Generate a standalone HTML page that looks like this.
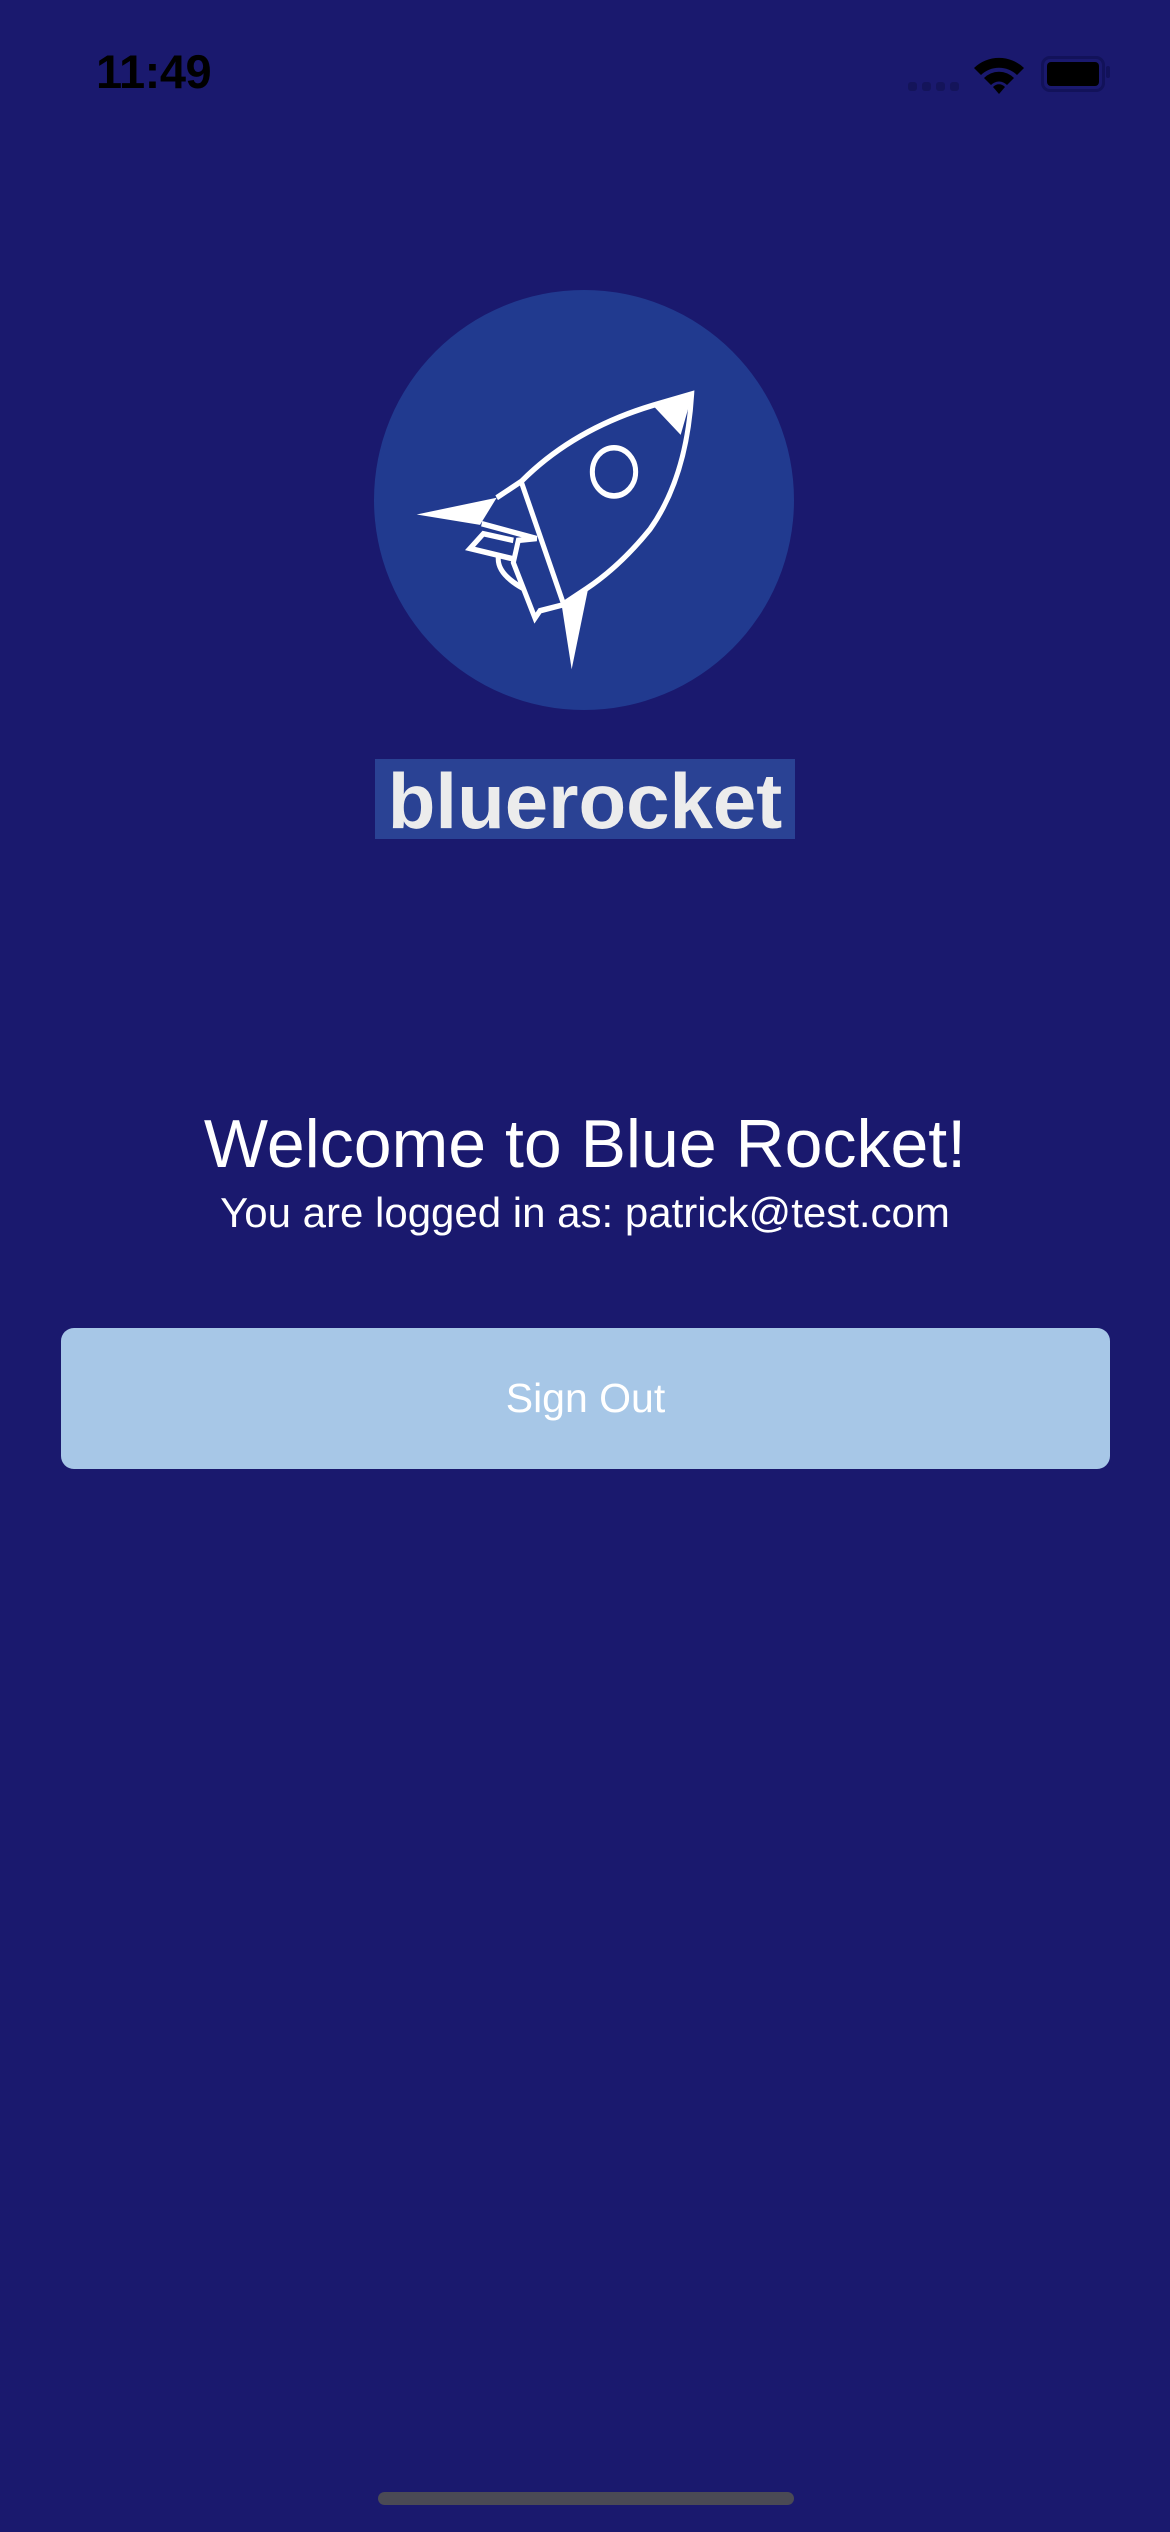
<!DOCTYPE html>
<html><head><meta charset="utf-8"><style>
html,body{margin:0;padding:0}
body{width:1170px;height:2532px;background:#1a196e;position:relative;overflow:hidden;font-family:"Liberation Sans",sans-serif}
.abs{position:absolute}
</style></head><body>
<div class="abs" style="left:96px;top:44px;font-size:47px;font-weight:bold;color:#000;letter-spacing:-0.5px">11:49</div>
<div class="abs" style="left:908px;top:82px;width:9px;height:9px;border-radius:3px;background:#14145a"></div>
<div class="abs" style="left:922px;top:82px;width:9px;height:9px;border-radius:3px;background:#14145a"></div>
<div class="abs" style="left:936px;top:82px;width:9px;height:9px;border-radius:3px;background:#14145a"></div>
<div class="abs" style="left:950px;top:82px;width:9px;height:9px;border-radius:3px;background:#14145a"></div>
<svg class="abs" style="left:972px;top:54px" width="54" height="40" viewBox="0 0 54 40">
<path d="M2 14 A36 36 0 0 1 52 14 L45 21 A26 26 0 0 0 9 21 Z" fill="#000"/>
<path d="M12 24 A21 21 0 0 1 42 24 L35 31 A11 11 0 0 0 19 31 Z" fill="#000"/>
<path d="M21 33 A8 8 0 0 1 33 33 L27 40 Z" fill="#000"/>
</svg>
<div class="abs" style="left:1041px;top:56px;width:58px;height:30px;border:3px solid #12125a;border-radius:9px"></div>
<div class="abs" style="left:1047px;top:62px;width:52px;height:24px;background:#000;border-radius:4px"></div>
<div class="abs" style="left:1106px;top:66px;width:4px;height:12px;background:#12125a;border-radius:2px"></div>

<div class="abs" style="left:374px;top:290px;width:420px;height:420px;border-radius:50%;background:#213a8f"></div>
<svg class="abs" style="left:360px;top:270px" width="460" height="580" viewBox="0 0 1380 1566" preserveAspectRatio="none">
<g fill="none" stroke="#fff" stroke-width="15" stroke-linejoin="miter">
<path d="M410 615 L485 570 Q640 430 880 365 L995 335 Q980 560 870 700 Q780 800 680 860 L605 905 L540 920 L525 940 L460 790 L475 730 L530 725 L365 685"/>
<path d="M485 575 L610 900"/>
<circle cx="762" cy="545" r="65"/>
<path d="M460 730 L370 712 L330 752 L460 780"/>
<path d="M415 775 Q410 820 490 860"/>
</g>
<g fill="#fff">
<path d="M170 660 L410 615 L360 688 Z"/>
<path d="M875 362 L998 332 L962 445 Z"/>
<path d="M605 905 L685 858 L635 1078 Z"/>
</g>
</svg>
<div class="abs" style="left:375px;top:759px;width:420px;height:80px;background:#2a4294"></div>
<div class="abs" style="left:355px;top:756px;width:460px;text-align:center;font-size:78px;font-weight:bold;color:#ececec;line-height:90px">bluerocket</div>

<div class="abs" style="left:0;top:1104px;width:1170px;text-align:center;font-size:68px;color:#fff;line-height:80px">Welcome to Blue Rocket!</div>
<div class="abs" style="left:0;top:1189px;width:1170px;text-align:center;font-size:42px;color:#fff;line-height:48px">You are logged in as: patrick@test.com</div>

<div class="abs" style="left:61px;top:1328px;width:1049px;height:141px;background:#a7c7e7;border-radius:13px;text-align:center;line-height:141px;font-size:41px;color:#fff">Sign Out</div>

<div class="abs" style="left:378px;top:2492px;width:416px;height:13px;background:#4a4a55;border-radius:7px"></div>
</body></html>
